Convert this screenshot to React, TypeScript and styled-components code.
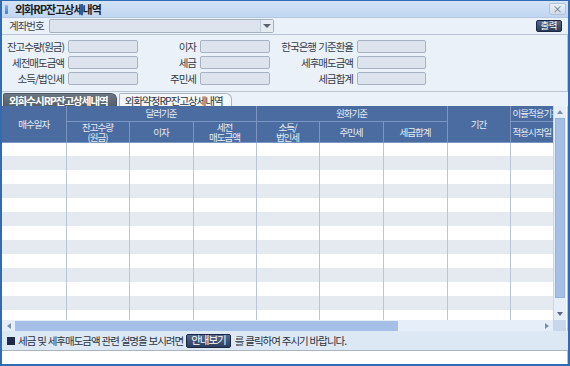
import React from 'react'
import styled, { createGlobalStyle } from 'styled-components'

const GlobalStyle = createGlobalStyle`
    html, body {
        margin: 0;
        padding: 0;
        background: #ffffff;
    }
    * {
        box-sizing: border-box;
    }
`

const FONT = `"Noto Sans CJK KR", "Noto Sans", sans-serif`

const Window = styled.div`
    width: 570px;
    height: 366px;
    border: 2px solid #2f6cb3;
    border-top-width: 1px;
    background: #eaf1f9;
    display: flex;
    flex-direction: column;
    overflow: hidden;
    font-family: ${FONT};
    font-size: 10.5px;
    line-height: 12px;
    letter-spacing: -1px;
    word-spacing: 1px;
    color: #2a2f38;
`

const TitleBar = styled.div`
    height: 17px;
    display: flex;
    align-items: center;
    padding: 0 2px 0 3px;
    background: linear-gradient(#d3e3f7, #c1d6f1);
    border-bottom: 1px solid #b4c8e2;
`

const TitleMark = styled.span`
    width: 3px;
    height: 9px;
    border-radius: 1px;
    background: linear-gradient(#8fb8ea, #3f7cc8);
    margin-right: 7px;
`

const Title = styled.span`
    font-weight: bold;
    font-size: 11px;
    letter-spacing: -1px;
    color: #1b1f26;
    flex: 1;
`

const CloseButton = styled.span`
    width: 17px;
    height: 12px;
    border: 1px solid #b2c2d6;
    border-radius: 2px;
    background: linear-gradient(#e9f0f9, #cfdcec);
    color: #6b7584;
    font-size: 10px;
    letter-spacing: 0;
    display: flex;
    align-items: center;
    justify-content: center;
    line-height: 1;
`

const TopRow = styled.div`
    height: 16px;
    display: flex;
    align-items: center;
    padding: 0 6px 0 7px;
`

const TopLabel = styled.span`
    width: 40px;
    color: #3b4350;
`

const Select = styled.div`
    width: 225px;
    height: 14px;
    border: 1px solid #a5b1c0;
    border-radius: 2px;
    background: #dde4ed;
    display: flex;
    justify-content: flex-end;
    align-items: stretch;
`

const SelectArrow = styled.span`
    width: 13px;
    border-left: 1px solid #c2ccd8;
    background: #e6ebf2;
    display: flex;
    align-items: center;
    justify-content: center;
    &::after {
        content: '';
        border-left: 4px solid transparent;
        border-right: 4px solid transparent;
        border-top: 4px solid #59626e;
    }
`

const Spacer = styled.span`
    flex: 1;
`

const DarkButton = styled.span<{ $wide?: boolean }>`
    height: ${p => (p.$wide ? 14 : 12)}px;
    padding: 0 ${p => (p.$wide ? 4 : 4)}px;
    border: 1px solid #1a2843;
    border-radius: 2px;
    background: linear-gradient(#56698a, #2c3d5c);
    color: #ffffff;
    display: inline-flex;
    align-items: center;
    flex-shrink: 0;
    font-size: ${p => (p.$wide ? 10.5 : 9.5)}px;
    letter-spacing: ${p => (p.$wide ? -1 : -0.5)}px;
    line-height: 1;
`

const FieldsPanel = styled.div`
    height: 58px;
    border-top: 1px solid #b8c4d3;
    border-bottom: 1px solid #b8c4d3;
    border-right: 1px solid #b8c4d3;
    padding-top: 5px;
    display: grid;
    grid-template-columns: 66px 70px 62px 70px 87px 69px;
    grid-auto-rows: 13px;
    row-gap: 3px;
    align-items: center;
`

const FieldLabel = styled.span`
    text-align: right;
    padding-right: 4px;
    white-space: nowrap;
    color: #353c48;
`

const FieldBox = styled.span`
    height: 13px;
    border: 1px solid #a6b2c2;
    border-radius: 2px;
    background: #dde4ee;
`

const TabRow = styled.div`
    height: 14px;
    display: flex;
    align-items: flex-end;
    padding-left: 1px;
`

const Tab = styled.span<{ $active?: boolean }>`
    height: 13px;
    display: flex;
    align-items: center;
    flex-shrink: 0;
    padding: 0 8px 0 5px;
    margin-right: ${p => (p.$active ? 2 : 0)}px;
    background: ${p => (p.$active ? 'linear-gradient(#6d7784, #55606d)' : '#f3f6fa')};
    color: ${p => (p.$active ? '#ffffff' : '#2d3440')};
    font-weight: ${p => (p.$active ? 'bold' : 'normal')};
    font-size: 10.5px;
    line-height: 11px;
    letter-spacing: -1px;
    border: 1px solid ${p => (p.$active ? '#4d5764' : '#a9b4c2')};
    border-bottom: none;
    border-radius: 2px 6px 0 0;
    white-space: nowrap;
`

const GridArea = styled.div`
    height: 225px;
    display: grid;
    grid-template-columns: 551px 13px;
    grid-template-rows: 214px 11px;
    border-right: 1px solid #b8c4d3;
    background: #ffffff;
`

const TableClip = styled.div`
    overflow: hidden;
`

const Table = styled.table`
    border-collapse: collapse;
    table-layout: fixed;
    width: 640px;
`

const HeadCell = styled.th<{ $h: number; $left?: boolean }>`
    height: ${p => p.$h}px;
    padding: 0 0 0 ${p => (p.$left ? 2 : 0)}px;
    background: #4a6ca1;
    color: #e6ecf5;
    font-size: 9.5px;
    font-weight: normal;
    text-align: ${p => (p.$left ? 'left' : 'center')};
    line-height: 10px;
    white-space: nowrap;
    border-right: 1px solid #7b96c0;
    border-bottom: 1px solid #7b96c0;
`

const Row = styled.tr<{ $alt: boolean }>`
    height: 14px;
    background: ${p => (p.$alt ? '#e5eaf1' : '#ffffff')};
`

const Cell = styled.td`
    padding: 0;
    border-right: 1px solid #b9c5d8;
`

const VScroll = styled.div`
    background: #e6eef9;
    display: flex;
    flex-direction: column;
    border-left: 1px solid #c8d6ea;
`

const ScrollArrow = styled.span<{ $dir: 'up' | 'down' | 'left' | 'right' }>`
    width: 12px;
    height: ${p => (p.$dir === 'up' || p.$dir === 'down' ? 12 : 11)}px;
    display: flex;
    align-items: center;
    justify-content: center;
    flex-shrink: 0;
    &::after {
        content: '';
        ${p =>
            p.$dir === 'up'
                ? 'border-left:3px solid transparent;border-right:3px solid transparent;border-bottom:4px solid #7d8fa8;'
                : p.$dir === 'down'
                ? 'border-left:3px solid transparent;border-right:3px solid transparent;border-top:4px solid #56688a;'
                : p.$dir === 'left'
                ? 'border-top:3px solid transparent;border-bottom:3px solid transparent;border-right:4px solid #7d8fa8;'
                : 'border-top:3px solid transparent;border-bottom:3px solid transparent;border-left:4px solid #7d8fa8;'}
    }
`

const VThumb = styled.span`
    flex: 1;
    margin: 0 1px 10px 1px;
    background: #a5bfe7;
    border: 1px solid #95b1dc;
`

const HScroll = styled.div`
    background: #e6eef9;
    display: flex;
    align-items: center;
    padding-left: 1px;
`

const HThumb = styled.span<{ $w: number }>`
    height: 10px;
    width: ${p => p.$w}px;
    background: #a5bfe7;
    margin-right: auto;
`

const Corner = styled.div`
    background: #c9d7ec;
`

const Footer = styled.div`
    height: 19px;
    display: flex;
    align-items: center;
    padding-left: 5px;
    background: #dde8f5;
    white-space: nowrap;
    word-spacing: 0.5px;
    color: #2c3340;
`

const Square = styled.span`
    width: 8px;
    height: 8px;
    background: #1e2c4a;
    margin-right: 3px;
    flex-shrink: 0;
`

const FooterText = styled.span<{ $after?: boolean }>`
    margin: 0 3px 0 ${p => (p.$after ? 4 : 0)}px;
`

const BottomBlank = styled.div`
    flex: 1;
    background: #ffffff;
    border-top: 1px solid #aab3bf;
    border-right: 1px solid #b8c4d3;
`

const fields: [string, string, string][] = [
    ['잔고수량(원금)', '이자', '한국은행 기준환율'],
    ['세전매도금액', '세금', '세후매도금액'],
    ['소득/법인세', '주민세', '세금합계'],
]

const colWidths = [64, 63, 64, 63, 63, 64, 64, 63, 63, 69]
const rows = Array.from({ length: 14 }, (_, i) => i)

export default function App() {
    return (
        <>
            <GlobalStyle />
            <Window>
                <TitleBar>
                    <TitleMark />
                    <Title>외화RP잔고상세내역</Title>
                    <CloseButton>×</CloseButton>
                </TitleBar>

                <TopRow>
                    <TopLabel>계좌번호</TopLabel>
                    <Select>
                        <SelectArrow />
                    </Select>
                    <Spacer />
                    <DarkButton>출력</DarkButton>
                </TopRow>

                <FieldsPanel>
                    {fields.map(row =>
                        row.map(label => (
                            <React.Fragment key={label}>
                                <FieldLabel>{label}</FieldLabel>
                                <FieldBox />
                            </React.Fragment>
                        ))
                    )}
                </FieldsPanel>

                <TabRow>
                    <Tab $active>외화수시RP잔고상세내역</Tab>
                    <Tab>외화약정RP잔고상세내역</Tab>
                </TabRow>

                <GridArea>
                    <TableClip>
                        <Table>
                            <colgroup>
                                {colWidths.map((w, i) => (
                                    <col key={i} style={{ width: w }} />
                                ))}
                            </colgroup>
                            <thead>
                                <tr>
                                    <HeadCell $h={15} rowSpan={2}>매수일자</HeadCell>
                                    <HeadCell $h={15} colSpan={3}>달러기준</HeadCell>
                                    <HeadCell $h={15} colSpan={3}>원화기준</HeadCell>
                                    <HeadCell $h={15} rowSpan={2}>기간</HeadCell>
                                    <HeadCell $h={15} colSpan={2} $left>이율적용기간</HeadCell>
                                </tr>
                                <tr>
                                    <HeadCell $h={21}>잔고수량<br />(원금)</HeadCell>
                                    <HeadCell $h={21}>이자</HeadCell>
                                    <HeadCell $h={21}>세전<br />매도금액</HeadCell>
                                    <HeadCell $h={21}>소득/<br />법인세</HeadCell>
                                    <HeadCell $h={21}>주민세</HeadCell>
                                    <HeadCell $h={21}>세금합계</HeadCell>
                                    <HeadCell $h={21} $left>적용시작일</HeadCell>
                                    <HeadCell $h={21}>적용종료일</HeadCell>
                                </tr>
                            </thead>
                            <tbody>
                                {rows.map(r => (
                                    <Row key={r} $alt={r % 2 === 1}>
                                        {colWidths.map((_, c) => (
                                            <Cell key={c} />
                                        ))}
                                    </Row>
                                ))}
                            </tbody>
                        </Table>
                    </TableClip>
                    <VScroll>
                        <ScrollArrow $dir="up" />
                        <VThumb />
                        <ScrollArrow $dir="down" />
                    </VScroll>
                    <HScroll>
                        <ScrollArrow $dir="left" />
                        <HThumb $w={383} />
                        <ScrollArrow $dir="right" />
                    </HScroll>
                    <Corner />
                </GridArea>

                <Footer>
                    <Square />
                    <FooterText>세금 및 세후매도금액 관련 설명을 보시려면</FooterText>
                    <DarkButton $wide>안내보기</DarkButton>
                    <FooterText $after>를 클릭하여 주시기 바랍니다.</FooterText>
                </Footer>

                <BottomBlank />
            </Window>
        </>
    )
}
